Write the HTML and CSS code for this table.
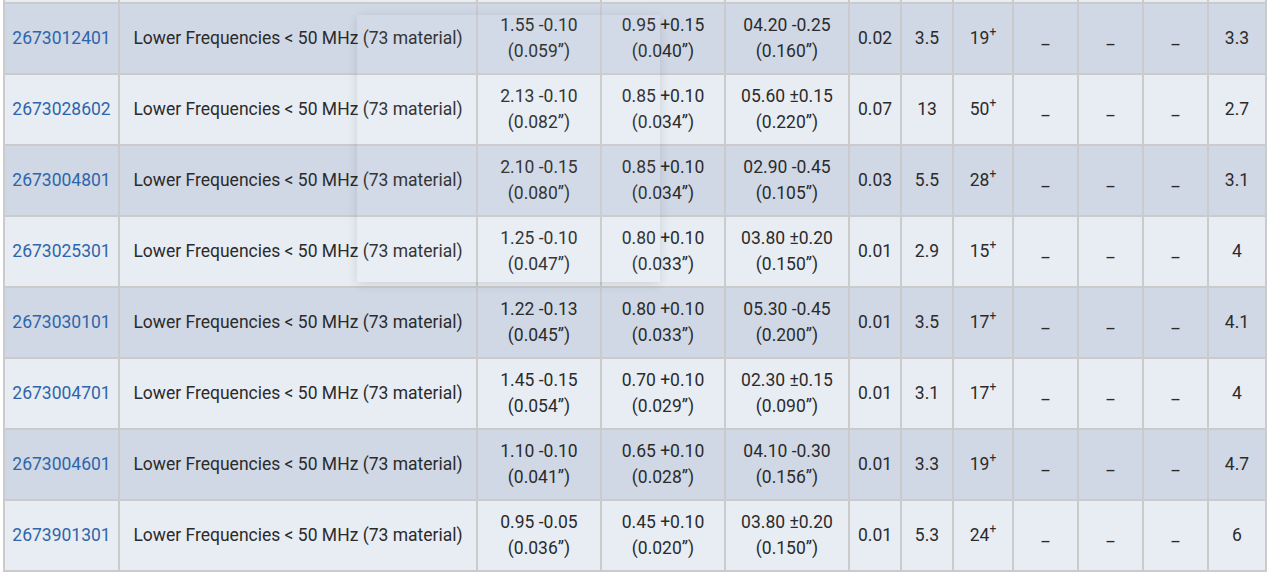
FILE: index.html
```html
<!DOCTYPE html>
<html lang="en">
<head>
<meta charset="utf-8">
<title>Parts table</title>
<link rel="stylesheet" href="styles.css">
</head>
<body>
<div class="frame">
<table class="parts">
<colgroup>
<col class="c-pn"><col class="c-desc"><col class="c-dim"><col class="c-dim"><col class="c-dim">
<col class="c-sm"><col class="c-sm"><col class="c-md"><col class="c-dash"><col class="c-dash"><col class="c-dash"><col class="c-last">
</colgroup>
<tbody>
<tr class="cut"><td></td><td></td><td></td><td></td><td></td><td></td><td></td><td></td><td></td><td></td><td></td><td></td></tr>
<tr class="dark"><td><a href="#">2673012401</a></td><td>Lower Frequencies &lt; 50 MHz (73 material)</td><td>1.55 -0.10<br>(0.059”)</td><td>0.95 +0.15<br>(0.040”)</td><td>04.20 -0.25<br>(0.160”)</td><td>0.02</td><td>3.5</td><td>19<sup>+</sup></td><td>_</td><td>_</td><td>_</td><td>3.3</td></tr>
<tr class="light"><td><a href="#">2673028602</a></td><td>Lower Frequencies &lt; 50 MHz (73 material)</td><td>2.13 -0.10<br>(0.082”)</td><td>0.85 +0.10<br>(0.034”)</td><td>05.60 ±0.15<br>(0.220”)</td><td>0.07</td><td>13</td><td>50<sup>+</sup></td><td>_</td><td>_</td><td>_</td><td>2.7</td></tr>
<tr class="dark"><td><a href="#">2673004801</a></td><td>Lower Frequencies &lt; 50 MHz (73 material)</td><td>2.10 -0.15<br>(0.080”)</td><td>0.85 +0.10<br>(0.034”)</td><td>02.90 -0.45<br>(0.105”)</td><td>0.03</td><td>5.5</td><td>28<sup>+</sup></td><td>_</td><td>_</td><td>_</td><td>3.1</td></tr>
<tr class="light"><td><a href="#">2673025301</a></td><td>Lower Frequencies &lt; 50 MHz (73 material)</td><td>1.25 -0.10<br>(0.047”)</td><td>0.80 +0.10<br>(0.033”)</td><td>03.80 ±0.20<br>(0.150”)</td><td>0.01</td><td>2.9</td><td>15<sup>+</sup></td><td>_</td><td>_</td><td>_</td><td>4</td></tr>
<tr class="dark"><td><a href="#">2673030101</a></td><td>Lower Frequencies &lt; 50 MHz (73 material)</td><td>1.22 -0.13<br>(0.045”)</td><td>0.80 +0.10<br>(0.033”)</td><td>05.30 -0.45<br>(0.200”)</td><td>0.01</td><td>3.5</td><td>17<sup>+</sup></td><td>_</td><td>_</td><td>_</td><td>4.1</td></tr>
<tr class="light"><td><a href="#">2673004701</a></td><td>Lower Frequencies &lt; 50 MHz (73 material)</td><td>1.45 -0.15<br>(0.054”)</td><td>0.70 +0.10<br>(0.029”)</td><td>02.30 ±0.15<br>(0.090”)</td><td>0.01</td><td>3.1</td><td>17<sup>+</sup></td><td>_</td><td>_</td><td>_</td><td>4</td></tr>
<tr class="dark"><td><a href="#">2673004601</a></td><td>Lower Frequencies &lt; 50 MHz (73 material)</td><td>1.10 -0.10<br>(0.041”)</td><td>0.65 +0.10<br>(0.028”)</td><td>04.10 -0.30<br>(0.156”)</td><td>0.01</td><td>3.3</td><td>19<sup>+</sup></td><td>_</td><td>_</td><td>_</td><td>4.7</td></tr>
<tr class="light"><td><a href="#">2673901301</a></td><td>Lower Frequencies &lt; 50 MHz (73 material)</td><td>0.95 -0.05<br>(0.036”)</td><td>0.45 +0.10<br>(0.020”)</td><td>03.80 ±0.20<br>(0.150”)</td><td>0.01</td><td>5.3</td><td>24<sup>+</sup></td><td>_</td><td>_</td><td>_</td><td>6</td></tr>
</tbody>
</table>
<div class="hover-card" aria-hidden="true"></div>
</div>
</body>
</html>
```
FILE: styles.css
```css
html, body {
  margin: 0;
  padding: 0;
  background: #ffffff;
}
body {
  font-family: Roboto, "Liberation Sans", Arial, sans-serif;
  font-size: 17.5px;
  color: #2b2b2b;
}
.frame {
  position: relative;
  padding-left: 3px;
  height: 573px;
  overflow: hidden;
}
.parts {
  border-collapse: separate;
  border-spacing: 0;
  table-layout: fixed;
  width: 1264px;
  border-left: 2px solid #cbcbcb;
}
.c-pn { width: 115px; }
.c-desc { width: 358px; }
.c-dim { width: 124px; }
.c-sm { width: 52px; }
.c-md { width: 60px; }
.c-dash { width: 65px; }
.c-last { width: 58px; }
.parts td {
  box-sizing: border-box;
  border-right: 2px solid #cbcbcb;
  border-bottom: 2px solid #cbcbcb;
  text-align: center;
  vertical-align: middle;
  padding: 0 2px 2px;
  height: 71px;
  line-height: 26px;
  white-space: nowrap;
}
.parts tr.cut td {
  height: 4px;
  padding: 0;
  line-height: 0;
}
.cut { background: #e8edf4; }
.dark { background: #d0d8e6; }
.light { background: #e8edf4; }
.parts a {
  color: #2f65aa;
  text-decoration: none;
}
.parts sup {
  font-size: 12px;
  line-height: 0;
  vertical-align: 8px;
}
.hover-card {
  position: absolute;
  left: 357px;
  top: 15px;
  width: 303px;
  height: 267px;
  background: rgba(255, 255, 255, 0.05);
  box-shadow: 0 2px 10px rgba(0, 0, 0, 0.12);
  pointer-events: none;
}
```
